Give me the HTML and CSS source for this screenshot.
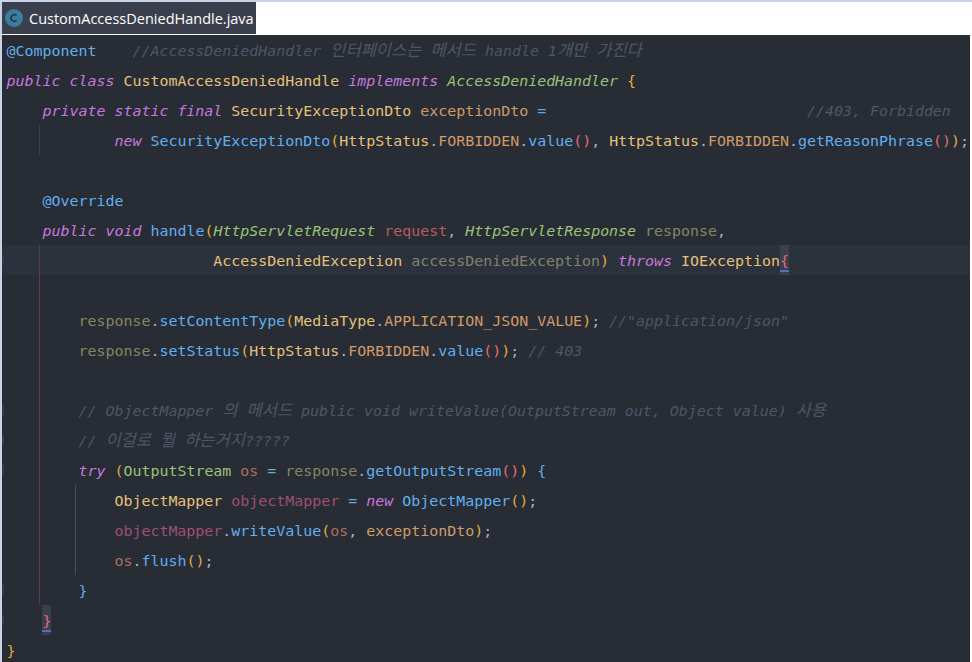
FILE: index.html
```html
<!DOCTYPE html>
<html lang="en">
<head>
  <meta charset="UTF-8">
  <meta name="viewport" content="width=device-width, initial-scale=1.0">
  <title>CustomAccessDeniedHandle.java</title>
  <link rel="stylesheet" href="styles.css">
</head>
<body>

  <div class="window">
    <div class="tab-bar">
      <div class="tab">
        <svg class="tab-icon" width="24" height="24" viewBox="0 0 24 24">
          <circle cx="12" cy="12" r="9" fill="#3a7d9c"/>
          <path d="M14.6 9.6a3.3 3.3 0 1 0 0 4.8" fill="none" stroke="#1f3645" stroke-width="1.6"/>
        </svg>
        <span>CustomAccessDeniedHandle.java</span>
      </div>
    </div>

    <div class="editor">
      <div class="guide guide-a"></div>
      <div class="guide guide-b"></div>
      <div class="guide guide-c"></div>

      <div class="line"><span class="ann">@Component</span>    <span class="com">//AccessDeniedHandler <span class="ko">인터페이스는</span> <span class="ko">메서드</span> handle 1<span class="ko">개만</span> <span class="ko">가진다</span></span></div>
      <div class="line"><span class="kw">public class</span> <span class="cls">CustomAccessDeniedHandle</span> <span class="kw">implements</span> <span class="ifc">AccessDeniedHandler</span> <span class="br1">{</span></div>
      <div class="line">    <span class="kw">private static final</span> <span class="cls">SecurityExceptionDto</span> <span class="fld">exceptionDto</span> <span class="op">=</span>                             <span class="com">//403, Forbidden</span></div>
      <div class="line">            <span class="kw">new</span> <span class="fn">SecurityExceptionDto</span><span class="br1">(</span><span class="cls">HttpStatus</span><span class="dot">.</span><span class="fld">FORBIDDEN</span><span class="dot">.</span><span class="fn">value</span><span class="br2">()</span><span class="dot">,</span> <span class="cls">HttpStatus</span><span class="dot">.</span><span class="fld">FORBIDDEN</span><span class="dot">.</span><span class="fn">getReasonPhrase</span><span class="br2">()</span><span class="br1">)</span><span class="dot">;</span></div>
      <div class="line"></div>
      <div class="line">    <span class="ann">@Override</span></div>
      <div class="line">    <span class="kw">public void</span> <span class="fn">handle</span><span class="br1">(</span><span class="ifc">HttpServletRequest</span> <span class="req">request</span><span class="dot">,</span> <span class="ifc">HttpServletResponse</span> <span class="res">response</span><span class="dot">,</span></div>
      <div class="line current fold">                       <span class="cls">AccessDeniedException</span> <span class="dim">accessDeniedException</span><span class="br1">)</span> <span class="kw">throws</span> <span class="cls">IOException</span><span class="match">{</span></div>
      <div class="line"></div>
      <div class="line">        <span class="res">response</span><span class="dot">.</span><span class="fn">setContentType</span><span class="br1">(</span><span class="cls">MediaType</span><span class="dot">.</span><span class="fld">APPLICATION_JSON_VALUE</span><span class="br1">)</span><span class="dot">;</span> <span class="com">//"application/json"</span></div>
      <div class="line">        <span class="res">response</span><span class="dot">.</span><span class="fn">setStatus</span><span class="br1">(</span><span class="cls">HttpStatus</span><span class="dot">.</span><span class="fld">FORBIDDEN</span><span class="dot">.</span><span class="fn">value</span><span class="br2">()</span><span class="br1">)</span><span class="dot">;</span> <span class="com">// 403</span></div>
      <div class="line"></div>
      <div class="line fold">        <span class="com">// ObjectMapper <span class="ko">의</span> <span class="ko">메서드</span> public void writeValue(OutputStream out, Object value) <span class="ko">사용</span></span></div>
      <div class="line fold">        <span class="com">// <span class="ko">이걸로</span> <span class="ko">뭘</span> <span class="ko">하는거지</span>?????</span></div>
      <div class="line fold">        <span class="kw">try</span> <span class="br1">(</span><span class="grn">OutputStream</span> <span class="os">os</span> <span class="op">=</span> <span class="res">response</span><span class="dot">.</span><span class="fn">getOutputStream</span><span class="br2">()</span><span class="br1">)</span> <span class="fn">{</span></div>
      <div class="line">            <span class="cls">ObjectMapper</span> <span class="obj">objectMapper</span> <span class="op">=</span> <span class="kw">new</span> <span class="fn">ObjectMapper</span><span class="br1">()</span><span class="dot">;</span></div>
      <div class="line">            <span class="obj">objectMapper</span><span class="dot">.</span><span class="fn">writeValue</span><span class="br1">(</span><span class="os">os</span><span class="dot">,</span> <span class="fld">exceptionDto</span><span class="br1">)</span><span class="dot">;</span></div>
      <div class="line">            <span class="os">os</span><span class="dot">.</span><span class="fn">flush</span><span class="br1">()</span><span class="dot">;</span></div>
      <div class="line fold">        <span class="fn">}</span></div>
      <div class="line fold">    <span class="match">}</span></div>
      <div class="line"><span class="br1">}</span></div>
    </div>
  </div>

</body>
</html>
```

FILE: styles.css
```css
html, body {
  margin: 0;
  padding: 0;
  height: 100%;
  overflow: hidden;
}

.window {
  height: 662px;
  box-sizing: border-box;
  padding: 2px 0 0 2px;
  background-color: #c8d3e6;
  display: flex;
  flex-direction: column;
}

.tab-bar {
  height: 32px;
  background-color: white;
  border-bottom: 1px solid white;
  display: flex;
  flex-shrink: 0;
}

.tab {
  width: 254px;
  background-color: #3b3f4d;
  color: white;
  font-family: "Open Sans", sans-serif;
  font-size: 14.5px;
  display: flex;
  align-items: center;
  gap: 3px;
  white-space: nowrap;
}

.tab-icon {
  flex-shrink: 0;
}

.editor {
  position: relative;
  flex: 1;
  overflow: hidden;
  background-color: #282c35;
  border-right: 2px solid white;
  font-family: "DejaVu Sans Mono", monospace;
  font-size: 14.95px;
  color: #abb2bf;
}

.line {
  position: relative;
  height: 30px;
  line-height: 32px;
  padding-left: 4.5px;
  white-space: pre;
}

.current {
  background-color: #2c323c;
}

/* fold markers in the gutter */
.fold::before {
  content: "";
  position: absolute;
  left: 0;
  top: 10px;
  width: 2px;
  height: 10px;
  background-color: #363b46;
}

/* indent guides */
.guide {
  position: absolute;
  z-index: 1;
  width: 1px;
  left: 37px;
}

.guide-a {
  top: 90px;
  height: 30px;
  background-color: #3c414c;
}

.guide-b {
  top: 210px;
  height: 360px;
  background-color: #5a3c44;
}

.guide-c {
  left: 73px;
  top: 450px;
  height: 90px;
  background-color: #3a5068;
}

.ko {
  font-family: "Noto Sans CJK KR", sans-serif;
  font-size: 16.5px;
  line-height: 1;
}

.kw { color: #c678dd; font-style: italic; }
.cls { color: #e5c07b; }
.ifc { color: #98c379; font-style: italic; }
.grn { color: #98c379; }
.ann { color: #61afef; }
.fn { color: #61afef; }
.fld { color: #d19a66; }
.op { color: #61a8dc; }
.dot { color: #a0b4c8; }
.com { color: #4f5666; font-style: italic; }
.req { color: #b65c63; }
.res { color: #858660; }
.dim { color: #84806c; }
.os { color: #a8705f; }
.obj { color: #a04f6e; }
.br1 { color: #e2ac3f; }
.br2 { color: #e06c75; }

.match {
  display: inline-block;
  height: 30px;
  vertical-align: top;
  color: #e06c75;
  background-color: #3a3f4b;
  background-image: linear-gradient(#4a72c4, #4a72c4);
  background-size: 100% 2px;
  background-position: 0 25px;
  background-repeat: no-repeat;
}
```
